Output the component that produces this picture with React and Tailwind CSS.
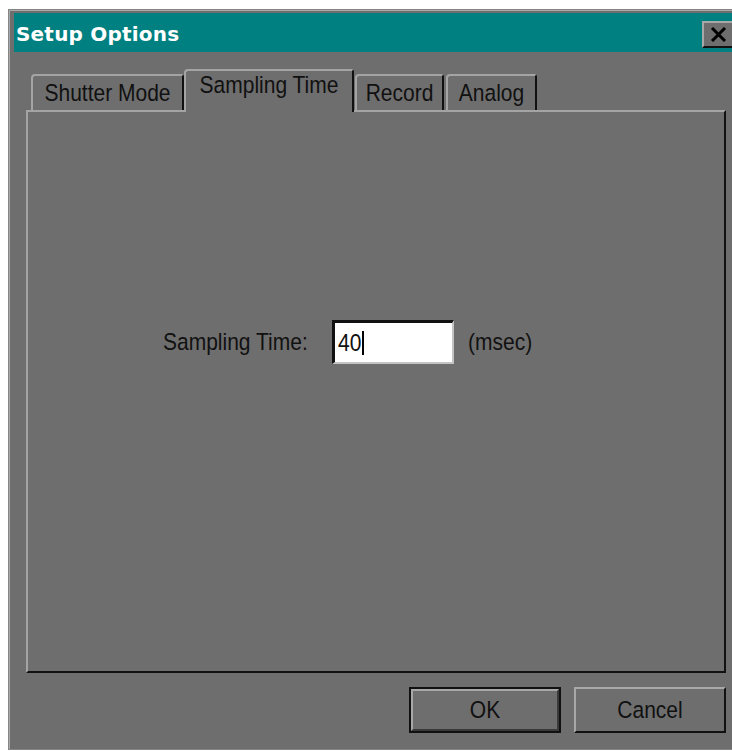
import React from 'react';

// Old-style Windows "Setup Options" dialog with a tab strip
const face = 'bg-[#6e6e6e]';
const bodyFont = { fontFamily: '"Liberation Sans", Arial, sans-serif' };

const Tab = ({ label, width, selected, className = '' }) => (
  <div
    className={`${width} ${className} ${face} relative flex justify-center border-l-2 border-t-2 border-r-2 border-l-[#a4a4a4] border-t-[#a4a4a4] border-r-[#111] rounded-tl-[4px] rounded-tr-[3px] ${
      selected ? 'h-[43px] -mb-[2px] z-10 pt-[3px]' : 'h-[36px] pt-[5px]'
    }`}
  >
    <span className="inline-block text-[21px] leading-[24px] text-[#111] scale-y-[1.15]">{label}</span>
  </div>
);

const Button = ({ label, isDefault }) => (
  <div className={`w-[152px] h-[46px] ${isDefault ? 'border-2 border-[#111]' : ''}`}>
    <div
      className={`h-full w-full ${face} flex items-center justify-center border-l-2 border-t-2 border-l-[#a8a8a8] border-t-[#a8a8a8] border-r-2 border-b-2 ${
        isDefault ? 'border-r-[#3a3a3a] border-b-[#3a3a3a]' : 'border-r-[#111] border-b-[#111]'
      }`}
    >
      <span className="inline-block text-[21px] text-[#111] scale-y-[1.15]">{label}</span>
    </div>
  </div>
);

export default function App() {
  return (
    <div className="w-[732px] h-[751px] overflow-hidden bg-white pt-[9px] pl-[8px]" style={bodyFont}>
      <div className={`w-[740px] h-[741px] ${face} border border-[#858585] shadow-[inset_1px_1px_0_#a9a9a9] pl-[5px] pt-[3px]`}>
        {/* title bar */}
        <div className="h-[39px] w-[728px] bg-[#008080] flex items-center justify-between pl-[2px] pr-[4px]">
          <span
            className="text-white font-bold text-[20px] leading-none pt-[3px] tracking-[0.2px]"
            style={{ fontFamily: '"DejaVu Sans", Verdana, sans-serif' }}
          >
            Setup Options
          </span>
          <div className={`w-[36px] h-[27px] mt-[3px] ${face} border-l-2 border-t-2 border-l-[#a8a8a8] border-t-[#a8a8a8] border-r-2 border-b-2 border-r-[#111] border-b-[#111] flex items-center pl-[6px]`}>
            <svg width="17" height="15" viewBox="0 0 17 15">
              <path d="M2 1 L15 14 M15 1 L2 14" stroke="#000" strokeWidth="3" fill="none" />
            </svg>
          </div>
        </div>

        <div className="pl-[12px] pt-[17px]">
          {/* tab strip */}
          <div className="flex items-end pl-[5px]">
            <Tab label="Shutter Mode" width="w-[153px]" />
            <Tab label="Sampling Time" width="w-[170px]" selected />
            <Tab label="Record" width="w-[89px]" className="ml-[1px]" />
            <Tab label="Analog" width="w-[91px]" className="ml-[2px]" />
          </div>

          {/* tab page */}
          <div className="w-[700px] h-[563px] border-l-2 border-t-2 border-l-[#a4a4a4] border-t-[#a4a4a4] border-r-2 border-b-2 border-r-[#111] border-b-[#111] pt-[208px] pl-[135px]">
            <div className="flex items-center">
              <span className="inline-block w-[169px] text-[21px] text-[#111] scale-y-[1.15] origin-left">Sampling Time:</span>
              <div className="w-[122px] h-[44px] bg-white border-l-[3px] border-t-[3px] border-l-[#111] border-t-[#111] border-r-2 border-b-2 border-r-[#c4c4c4] border-b-[#c4c4c4] flex items-center pl-[3px]">
                <span className="inline-block text-[21px] text-[#111] scale-y-[1.15]">40</span>
                <span className="w-[2px] h-[24px] bg-black ml-[1px]" />
              </div>
              <span className="inline-block ml-[14px] text-[21px] text-[#111] scale-y-[1.15]">(msec)</span>
            </div>
          </div>

          {/* dialog buttons */}
          <div className="w-[700px] flex justify-end gap-[13px] pt-[14px]">
            <Button label="OK" isDefault />
            <Button label="Cancel" />
          </div>
        </div>
      </div>
    </div>
  );
}
